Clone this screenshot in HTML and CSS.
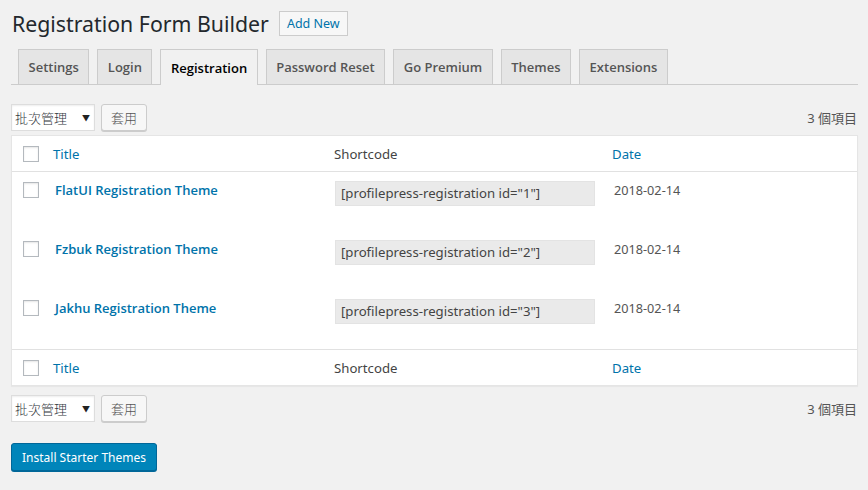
FILE: index.html
```html
<!DOCTYPE html>
<html>
<head>
<meta charset="utf-8">
<link rel="stylesheet" href="styles.css">
</head>
<body>
<div class="wrap">
  <div class="page-head">
    <h1 class="page-title">Registration Form Builder</h1>
    <a class="add-new">Add New</a>
  </div>
  <nav class="tabs">
    <a class="tab">Settings</a>
    <a class="tab">Login</a>
    <a class="tab active">Registration</a>
    <a class="tab">Password Reset</a>
    <a class="tab">Go Premium</a>
    <a class="tab">Themes</a>
    <a class="tab">Extensions</a>
  </nav>

  <div class="tablenav top">
    <div class="bulk">
      <div class="select">批次管理 <span class="caret">▼</span></div>
      <button class="btn">套用</button>
    </div>
    <div class="count">3 個項目</div>
  </div>

  <div class="table">
    <div class="row head">
      <div class="cb"><span class="box"></span></div>
      <div class="c-title link">Title</div>
      <div class="c-code">Shortcode</div>
      <div class="c-date link">Date</div>
    </div>
    <div class="row item">
      <div class="cb"><span class="box"></span></div>
      <div class="c-title"><a class="name">FlatUI Registration Theme</a></div>
      <div class="c-code"><div class="code">[profilepress-registration id="1"]</div></div>
      <div class="c-date date">2018-02-14</div>
    </div>
    <div class="row item">
      <div class="cb"><span class="box"></span></div>
      <div class="c-title"><a class="name">Fzbuk Registration Theme</a></div>
      <div class="c-code"><div class="code">[profilepress-registration id="2"]</div></div>
      <div class="c-date date">2018-02-14</div>
    </div>
    <div class="row item">
      <div class="cb"><span class="box"></span></div>
      <div class="c-title"><a class="name">Jakhu Registration Theme</a></div>
      <div class="c-code"><div class="code">[profilepress-registration id="3"]</div></div>
      <div class="c-date date">2018-02-14</div>
    </div>
    <div class="row head foot">
      <div class="cb"><span class="box"></span></div>
      <div class="c-title link">Title</div>
      <div class="c-code">Shortcode</div>
      <div class="c-date link">Date</div>
    </div>
  </div>

  <div class="tablenav bottom">
    <div class="bulk">
      <div class="select">批次管理 <span class="caret">▼</span></div>
      <button class="btn">套用</button>
    </div>
    <div class="count">3 個項目</div>
  </div>

  <button class="primary">Install Starter Themes</button>
</div>
</body>
</html>
```

FILE: styles.css
```css
* { box-sizing: border-box; }
html, body { margin: 0; padding: 0; }
body {
  background: #f1f1f1;
  font-family: "Noto Sans", "Open Sans", "Noto Sans CJK TC", sans-serif;
  font-size: 13px;
  color: #444;
  width: 868px;
  height: 490px;
  overflow: hidden;
}
.wrap { padding: 0 10px 0 11px; }

.page-head {
  display: flex;
  align-items: center;
  height: 46px;
}
.page-title {
  margin: 0 0 0 1px;
  font-weight: 400;
  font-size: 21.3px;
  color: #23282d;
}
.add-new {
  margin-left: 10px;
  border: 1px solid #ccc;
  background: #f7f7f7;
  color: #0073aa;
  font-size: 12.5px;
  padding: 0 7px;
  height: 25px;
  line-height: 23px;
}

.tabs {
  display: flex;
  align-items: flex-end;
  gap: 8px;
  border-bottom: 1px solid #ccc;
  padding-left: 7px;
  margin-top: 3px;
  height: 36px;
}
.tab {
  height: 35px;
  background: #e5e5e5;
  border: 1px solid #ccc;
  border-bottom: none;
  padding: 0 9.5px;
  line-height: 34px;
  font-family: "Open Sans", "Noto Sans", sans-serif;
  font-size: 13px;
  font-weight: 600;
  color: #555;
}
.tab.active {
  background: #f1f1f1;
  color: #000;
  height: 36px;
  margin-bottom: -1px;
  padding-top: 1px;
}

.tablenav {
  display: flex;
  justify-content: space-between;
  align-items: center;
  height: 28px;
}
.tablenav.top { margin-top: 18px; }
.tablenav.bottom { margin-top: 8px; }
.bulk { display: flex; gap: 6px; align-items: center; }
.select {
  width: 84px;
  height: 27px;
  background: #fff;
  border: 1px solid #ddd;
  box-shadow: 0 1px 2px rgba(0,0,0,.07) inset;
  font-family: "Noto Sans CJK TC", sans-serif;
  font-weight: 300;
  font-size: 13px;
  line-height: 25px;
  padding-left: 3px;
  color: #32373c;
  display: flex;
  justify-content: space-between;
  padding-right: 4px;
}
.caret { font-size: 8px; color: #222; }
.btn {
  height: 27px;
  padding: 0 9px;
  background: #f7f7f7;
  border: 1px solid #ccc;
  border-radius: 3px;
  box-shadow: 0 1px 0 #ccc;
  font-family: "Noto Sans CJK TC", sans-serif;
  font-weight: 300;
  font-size: 13px;
  color: #555;
}
.count {
  font-family: "Noto Sans", "Noto Sans CJK TC", sans-serif;
  font-size: 13px;
  color: #555;
  padding-right: 1px;
}

.table {
  margin-top: 4px;
  background: #fff;
  border: 1px solid #e5e5e5;
  box-shadow: 0 1px 1px rgba(0,0,0,.04);
}
.row { display: flex; }
.row.head {
  height: 36px;
  align-items: center;
  border-bottom: 1px solid #e1e1e1;
  font-size: 13.2px;
}
.row.foot {
  border-bottom: none;
  border-top: 1px solid #e1e1e1;
  height: 36px;
}
.row.item {
  height: 59px;
  padding-top: 8px;
  align-items: flex-start;
}
.cb { width: 41px; padding-left: 11px; display: flex; }
.row.item .cb { padding-top: 2px; }
.box {
  width: 16px; height: 16px;
  border: 1px solid #b4b9be;
  background: #fff;
  box-shadow: inset 0 1px 2px rgba(0,0,0,.1);
}
.c-title { width: 281px; }
.c-code { width: 278px; }
.c-date { flex: 1; }
.link { color: #0073aa; }
.name {
  color: #0073aa;
  font-family: "Open Sans", "Noto Sans", sans-serif;
  font-weight: 600;
  font-size: 13px;
  padding-left: 2px;
  display: block;
  line-height: 20px;
}
.code {
  margin-top: 1px;
  width: 260px;
  height: 25px;
  background: #eaeaea;
  border: 1px solid #e3e3e3;
  font-size: 13.2px;
  color: #444;
  line-height: 23px;
  padding-left: 5px;
  margin-left: 1px;
}
.date { font-size: 12.7px; line-height: 20px; color: #555; padding-left: 2px; }

.primary {
  margin-top: 21px;
  height: 28px;
  padding: 0 10px;
  background: #0085ba;
  border: 1px solid #006799;
  border-radius: 3px;
  box-shadow: 0 1px 0 #006799;
  color: #fff;
  font-family: "Noto Sans", sans-serif;
  font-size: 12px;
}
```
